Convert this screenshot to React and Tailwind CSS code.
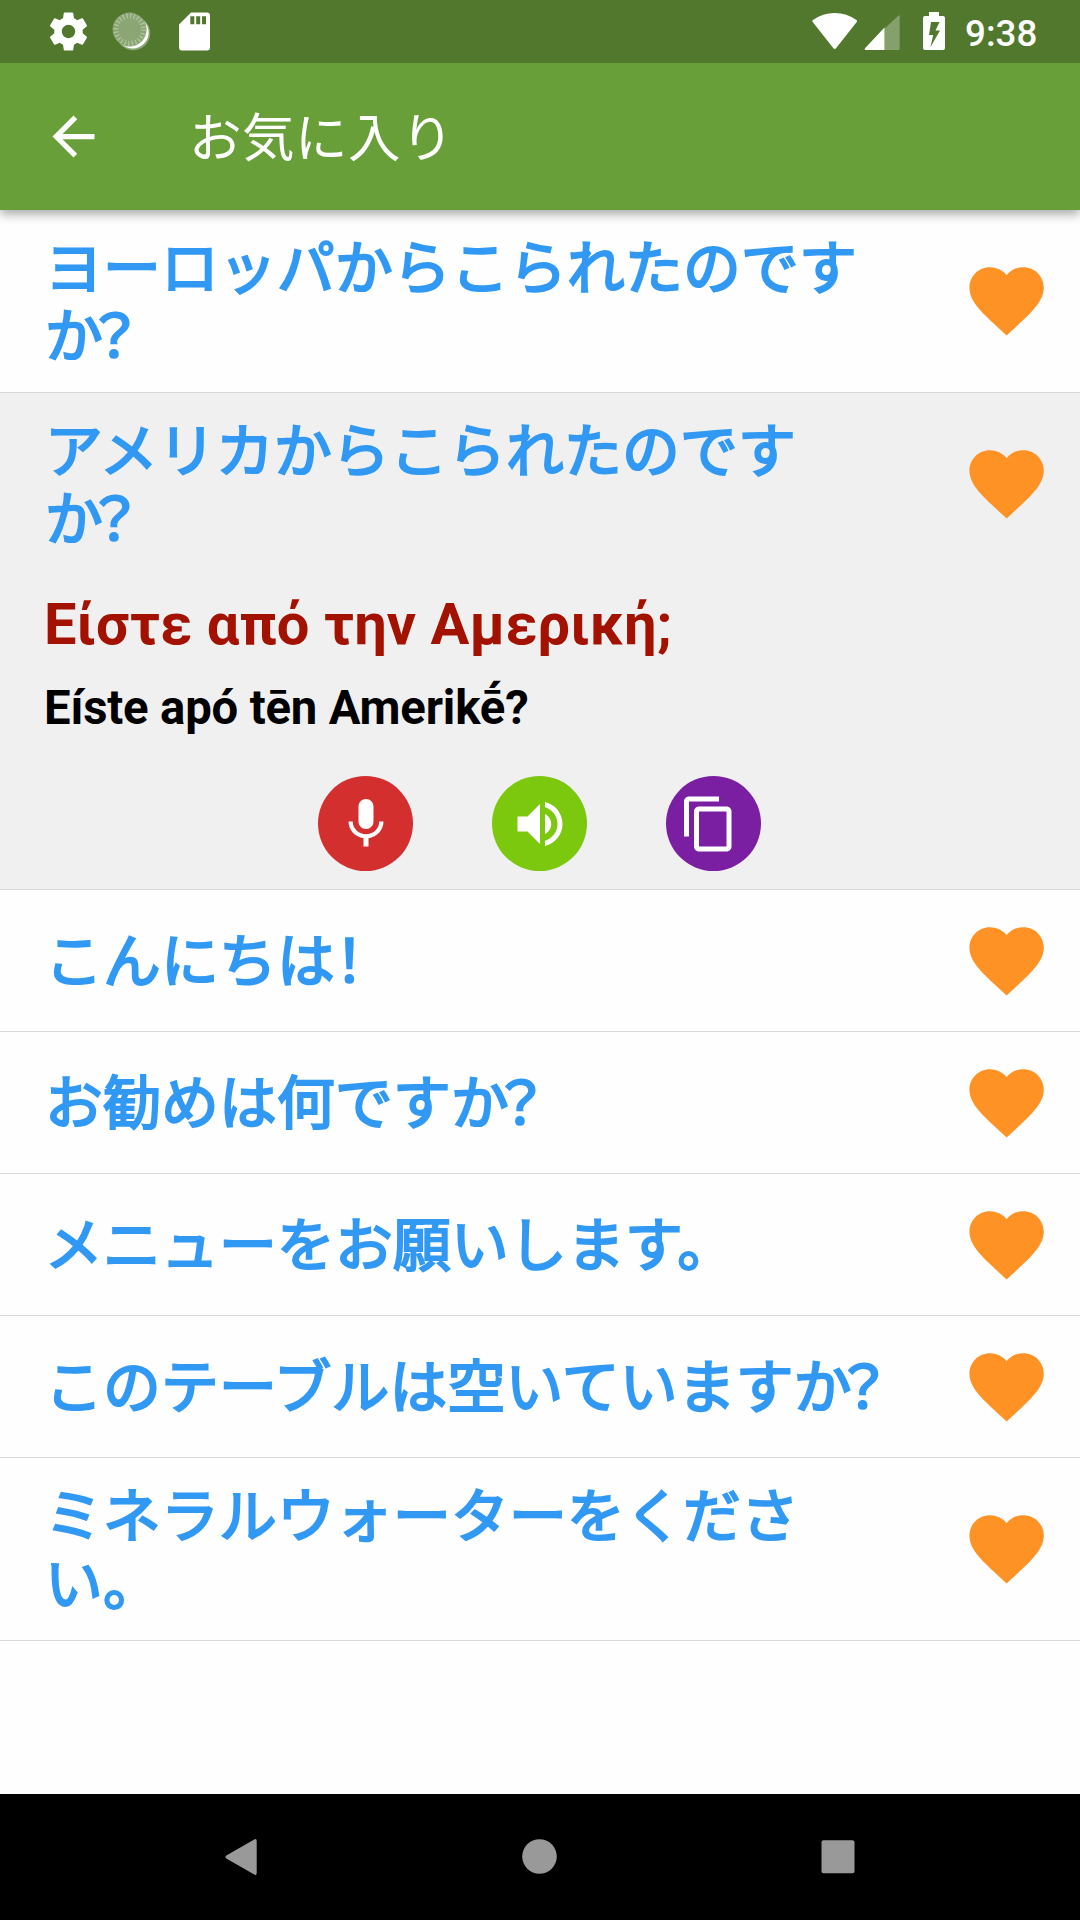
function Heart() {
  return (
    <svg viewBox="0 0 24 24" className="size-[89.25px] shrink-0 fill-[#ff9224]">
      <path d="M12 21.35l-1.45-1.32C5.4 15.36 2 12.28 2 8.5 2 5.42 4.42 3 7.5 3c1.74 0 3.41.81 4.5 2.09C13.09 3.81 14.76 3 16.5 3 19.58 3 22 5.42 22 8.5c0 3.78-3.4 6.86-8.55 11.54L12 21.35z" />
    </svg>
  );
}

function Phrase({ text, mark, tall }) {
  return (
    <div className={`flex items-center justify-between pr-[29px] pl-[45px] ${tall ? "h-[182px]" : "h-[141px]"}`}>
      <p className={`relative w-[870px] whitespace-pre-line font-['Noto_Sans_CJK_JP',sans-serif] text-[57.75px] leading-[68px] font-normal tracking-[0.25px] text-[#3199f3] [-webkit-text-stroke:2.2px_#3199f3] [font-feature-settings:'halt'] ${tall ? "-top-[3px]" : "-top-1"}`}>
        {text}
        {mark && <span className="-ml-[9.5px] [font-feature-settings:'palt']">{mark}</span>}
      </p>
      <Heart />
    </div>
  );
}

function Action({ color, d, shift }) {
  return (
    <button className={`flex size-[95px] items-center justify-center rounded-full ${color}`}>
      <svg viewBox="0 0 24 24" className={`size-[60px] fill-white ${shift ? "mr-[9px]" : ""}`}>
        <path d={d} />
      </svg>
    </button>
  );
}

function StatusBar() {
  return (
    <div className="relative z-20 flex h-[63px] items-center justify-between bg-[#51782c] text-white">
      <svg width="230" height="63" viewBox="0 0 230 63" fill="#fff">
        <g transform="translate(45.7 8.7) scale(1.9)">
          <path d="M19.43 12.98c.04-.32.07-.64.07-.98s-.03-.66-.07-.98l2.11-1.65c.19-.15.24-.42.12-.64l-2-3.46c-.12-.22-.39-.3-.61-.22l-2.49 1c-.52-.4-1.08-.73-1.69-.98l-.38-2.65C14.46 2.18 14.25 2 14 2h-4c-.25 0-.46.18-.49.42l-.38 2.65c-.61.25-1.17.59-1.69.98l-2.49-1c-.23-.09-.49 0-.61.22l-2 3.46c-.13.22-.07.49.12.64l2.11 1.65c-.04.32-.07.65-.07.98s.03.66.07.98l-2.11 1.65c-.19.15-.24.42-.12.64l2 3.46c.12.22.39.3.61.22l2.49-1c.52.4 1.08.73 1.69.98l.38 2.65c.03.24.24.42.49.42h4c.25 0 .46-.18.49-.42l.38-2.65c.61-.25 1.17-.59 1.69-.98l2.49 1c.23.09.49 0 .61-.22l2-3.46c.12-.22.07-.49-.12-.64l-2.11-1.65zM12 15.5c-1.93 0-3.5-1.57-3.5-3.5s1.57-3.5 3.5-3.5 3.5 1.57 3.5 3.5-1.57 3.5-3.5 3.5z" />
        </g>
        <circle cx="133.2" cy="33.2" r="17" fill="#8ba673" />
        <circle cx="132.6" cy="32.4" r="16" />
        <circle cx="129.6" cy="29.6" r="17" fill="#8ba673" />
        <circle cx="129.6" cy="29.6" r="13.8" fill="none" stroke="#b0c3a0" strokeWidth="5" strokeDasharray="1.3 2.313" />
        <path d="M191 12.5h16a3 3 0 0 1 3 3v32a3 3 0 0 1-3 3h-25a3 3 0 0 1-3-3v-23zM190.300 16.300v8h4v-8zM196.200 16.300v8h4v-8zM202 16.300v8h4v-8z" fillRule="evenodd" />
      </svg>
      <div className="flex items-center">
        <svg width="153" height="63" viewBox="0 0 153 63" fill="#fff">
          <path d="M.9 22.300Q-.2 21 1 20.100Q10.500 13 22.700 13T44.400 20.100Q45.600 21 44.500 22.300L24 48.200Q22.700 49.600 21.400 48.200Z" />
          <path d="M86.300 15.800Q87.700 14.300 87.700 16.300V48.500Q87.700 50 86.200 50H72.500V28.500Z" opacity=".3" />
          <path d="M72.500 27.500V50H54Q52 50 53 48.200Z" />
          <path d="M117 12h10v4h4a2 2 0 0 1 2 2v30a2 2 0 0 1-2 2h-18a2 2 0 0 1-2-2V18a2 2 0 0 1 2-2h4zM119 22l-2 13h4.200l-2.700 12 9.500-16.500h-4.500l4-8.500z" fillRule="evenodd" />
        </svg>
        <span className="w-[115px] font-['Roboto',sans-serif] text-[36.75px] leading-[63px] font-medium">
          <span className="relative top-0.5">9:38</span>
        </span>
      </div>
    </div>
  );
}

const MIC = "M12 14c1.66 0 2.99-1.34 2.99-3L15 5c0-1.66-1.34-3-3-3S9 3.34 9 5v6c0 1.66 1.34 3 3 3zm5.3-3c0 3-2.54 5.1-5.3 5.1S6.700 14 6.700 11H5c0 3.410 2.720 6.230 6 6.720V21h2v-3.280c3.280-.48 6-3.300 6-6.720h-1.700z";
const SPEAKER = "M3 9v6h4l5 5V4L7 9H3zm13.500 3c0-1.770-1.020-3.290-2.500-4.030v8.050c1.480-.73 2.500-2.250 2.500-4.020zM14 3.230v2.060c2.890.86 5 3.540 5 6.710s-2.110 5.850-5 6.710v2.060c4.010-.91 7-4.490 7-8.770s-2.990-7.860-7-8.770z";
const COPY = "M16 1H4c-1.100 0-2 .9-2 2v14h2V3h12V1zm3 4H8c-1.100 0-2 .9-2 2v14c0 1.100.9 2 2 2h11c1.100 0 2-.9 2-2V7c0-1.100-.9-2-2-2zm0 16H8V7h11v14z";

const ROWS = [
  { text: "ヨーロッパからこられたのです\nか", mark: "？", tall: true },
  { text: "アメリカからこられたのです\nか", mark: "？", tall: true, open: true },
  { text: "こんにちは！" },
  { text: "お勧めは何ですか", mark: "？" },
  { text: "メニューをお願いします。" },
  { text: "このテーブルは空いていますか", mark: "？" },
  { text: "ミネラルウォーターをくださ\nい。", tall: true },
];

export default function App() {
  return (
    <div lang="ja" className="flex h-[1920px] w-[1080px] flex-col overflow-hidden bg-[#fefefe] font-['Roboto','Noto_Sans_CJK_JP',sans-serif]">
      <StatusBar />
      <header className="z-10 flex h-[147px] items-center bg-[#689f38] pl-[42px] shadow-[0_4px_10px_rgba(0,0,0,0.35)]">
        <svg viewBox="0 0 24 24" className="size-[63px] fill-white">
          <path d="M20 11H7.830l5.590-5.590L12 4l-8 8 8 8 1.410-1.410L7.830 13H20v-2z" />
        </svg>
        <h1 className="relative -top-[3px] ml-[84px] font-['Noto_Sans_CJK_JP',sans-serif] text-[52.5px] leading-[62px] font-normal tracking-[0.5px] text-white">お気に入り</h1>
      </header>
      <main className="flex-1">
        {ROWS.map((row) => (
          <section key={row.text} className={`border-b border-[#d8d8d8] ${row.open ? "bg-[#f0f0f0]" : ""}`}>
            <Phrase text={row.text} mark={row.mark} tall={row.tall} />
            {row.open && (
              <div className="h-[314px] pl-11 font-['Roboto',sans-serif] font-bold">
                <p className="pt-[15px] text-[57.75px] leading-[68px] tracking-[0.1px] text-[#a31200]">Είστε από την Αμερική;</p>
                <p className="pt-[22px] text-[47.25px] leading-[56px] tracking-[-0.16px] text-black">Eíste apó tēn Amerikḗ?</p>
                <div className="mt-[40px] ml-[274px] flex gap-[79px]">
                  <Action color="bg-[#d32f2f]" d={MIC} />
                  <Action color="bg-[#7bc80e]" d={SPEAKER} />
                  <Action color="bg-[#7b1fa2]" d={COPY} shift />
                </div>
              </div>
            )}
          </section>
        ))}
      </main>
      <nav className="h-[126px] bg-black">
        <svg width="1080" height="126" viewBox="0 0 1080 126" fill="#999">
          <path d="M253.800 45.700Q256.700 44 256.700 47V79Q256.700 82 253.800 80.300L226.300 64.500Q224.500 63 226.300 61.500Z" />
          <circle cx="539.500" cy="62.500" r="17.300" />
          <rect x="821.500" y="46.300" width="33" height="33" rx="2" />
        </svg>
      </nav>
    </div>
  );
}
